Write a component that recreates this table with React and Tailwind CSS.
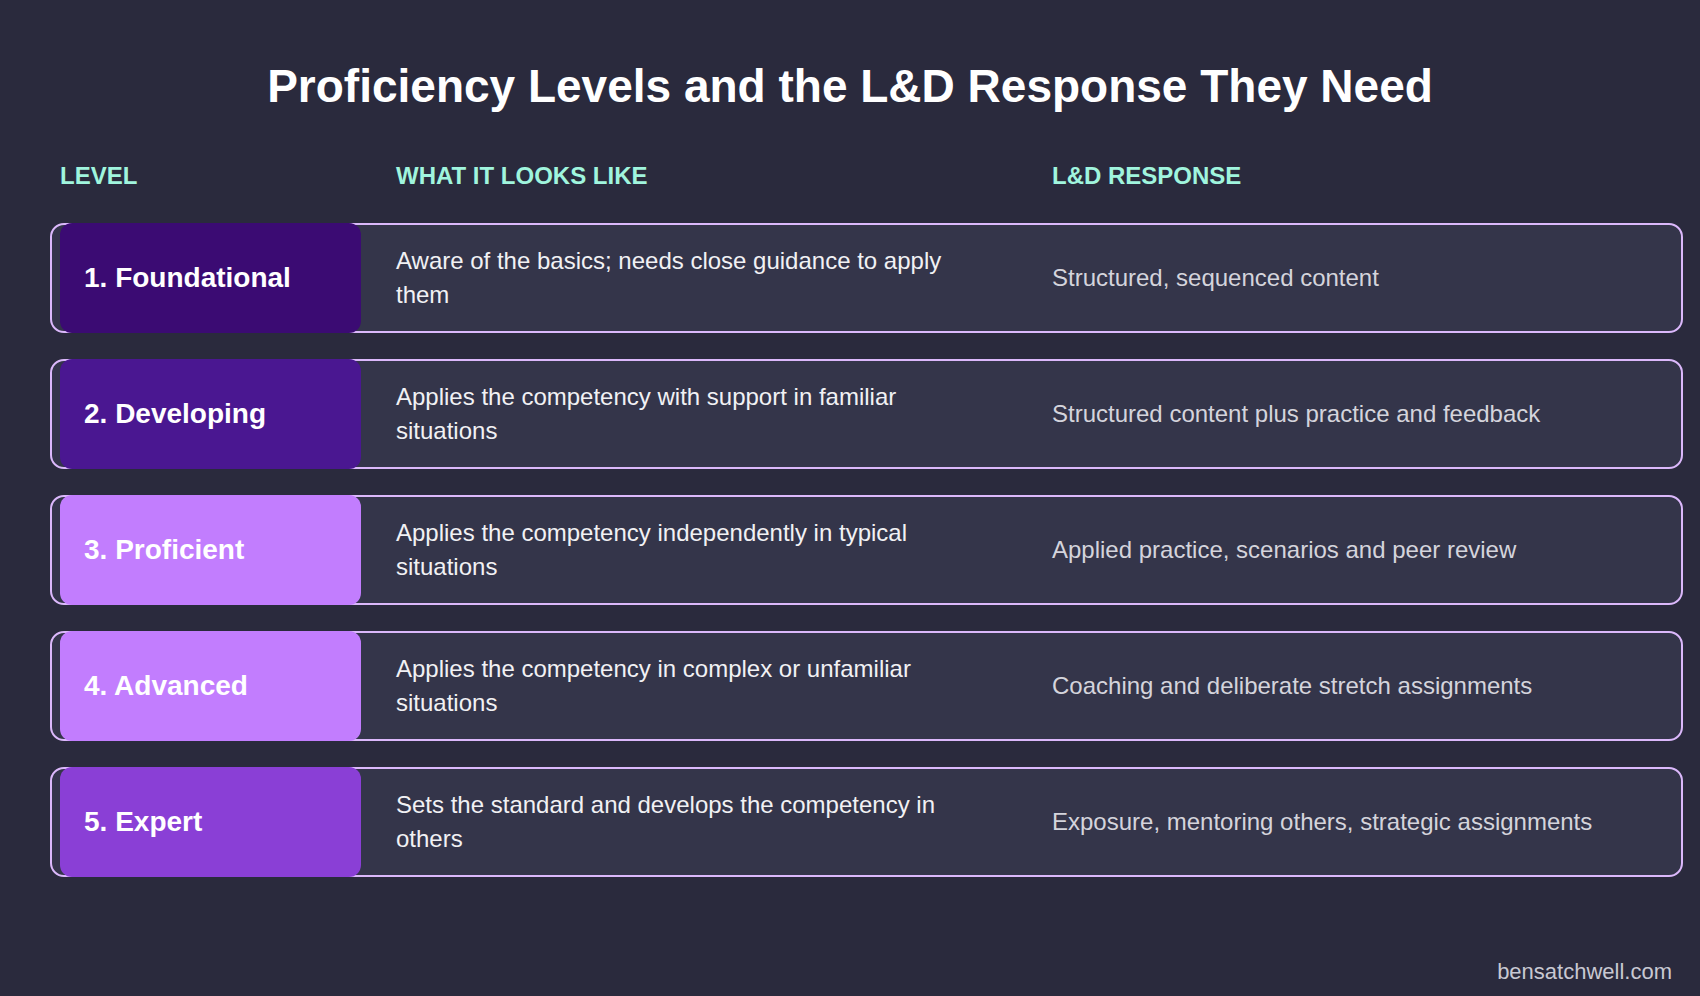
const levels = [
  {
    name: "1. Foundational",
    color: "bg-[#3b0b73]",
    looks: "Aware of the basics; needs close guidance to apply them",
    response: "Structured, sequenced content",
  },
  {
    name: "2. Developing",
    color: "bg-[#4a1791]",
    looks: "Applies the competency with support in familiar situations",
    response: "Structured content plus practice and feedback",
  },
  {
    name: "3. Proficient",
    color: "bg-[#c27dfe]",
    looks: "Applies the competency independently in typical situations",
    response: "Applied practice, scenarios and peer review",
  },
  {
    name: "4. Advanced",
    color: "bg-[#c27dfe]",
    looks: "Applies the competency in complex or unfamiliar situations",
    response: "Coaching and deliberate stretch assignments",
  },
  {
    name: "5. Expert",
    color: "bg-[#8a3fd6]",
    looks: "Sets the standard and develops the competency in others",
    response: "Exposure, mentoring others, strategic assignments",
  },
];

const App = () => {
  return (
    <div className="flex flex-col w-full h-[996px] bg-[#2a2a3d] font-['Liberation_Sans',Arial,sans-serif] overflow-hidden">
      {/* Title */}
      <h1 className="pt-[63px] text-center text-[46px] leading-none font-bold text-white">
        Proficiency Levels and the L&amp;D Response They Need
      </h1>

      {/* Column headings */}
      <div className="flex mt-[55px] ml-[60px] text-[24px] leading-none font-bold text-[#a0f5de]">
        <div className="w-[336px]">LEVEL</div>
        <div className="w-[656px]">WHAT IT LOOKS LIKE</div>
        <div>L&amp;D RESPONSE</div>
      </div>

      {/* Rows */}
      <div className="flex flex-col gap-[26px] mt-[35px] ml-[50px] w-[1633px]">
        {levels.map((lvl) => (
          <div
            key={lvl.name}
            className="grid grid-cols-[301px_691px_1fr] h-[110px] pl-[8px] border-2 border-[#dbb8fb] rounded-[14px] bg-[#34354a]"
          >
            <div
              className={`-my-[2px] flex items-center pl-[24px] rounded-[12px] ${lvl.color} text-white text-[28px] font-bold`}
            >
              {lvl.name}
            </div>
            <div className="flex items-center pl-[35px] pr-[76px] text-[24px] leading-[34px] text-[#f1f1f4]">
              {lvl.looks}
            </div>
            <div className="flex items-center text-[24px] leading-[34px] text-[#d4d4dc]">
              {lvl.response}
            </div>
          </div>
        ))}
      </div>

      {/* Footer */}
      <div className="mt-auto pb-[13px] pr-[28px] text-right text-[22px] leading-none text-[#c8c8d2]">
        bensatchwell.com
      </div>
    </div>
  );
};

export default App;
